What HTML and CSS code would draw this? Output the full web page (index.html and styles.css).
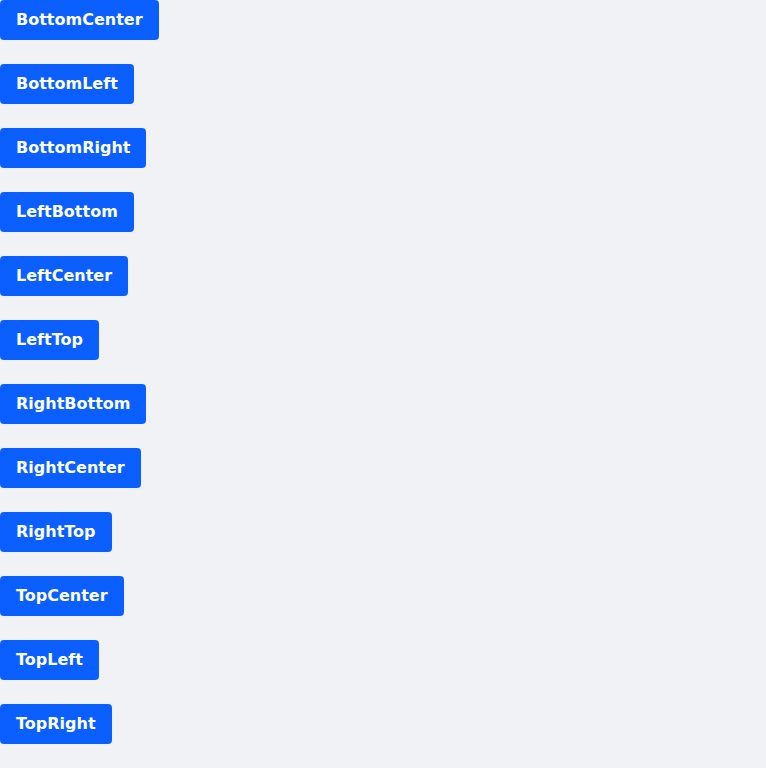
FILE: index.html
```html
<!DOCTYPE html>
<html>
<head>
<meta charset="utf-8">
<link rel="stylesheet" href="styles.css">
</head>
<body>
<div class="list">
  <button class="btn">BottomCenter</button>
  <button class="btn">BottomLeft</button>
  <button class="btn">BottomRight</button>
  <button class="btn">LeftBottom</button>
  <button class="btn">LeftCenter</button>
  <button class="btn">LeftTop</button>
  <button class="btn">RightBottom</button>
  <button class="btn">RightCenter</button>
  <button class="btn">RightTop</button>
  <button class="btn">TopCenter</button>
  <button class="btn">TopLeft</button>
  <button class="btn">TopRight</button>
</div>
</body>
</html>
```
FILE: styles.css
```css
html, body {
  margin: 0;
  padding: 0;
  background: #f1f2f6;
}
.list {
  display: flex;
  flex-direction: column;
  align-items: flex-start;
  gap: 24px;
}
.btn {
  height: 40px;
  padding: 0 16px;
  border: none;
  border-radius: 4px;
  background: #0b5fff;
  color: #fff;
  font-family: "DejaVu Sans", sans-serif;
  font-weight: bold;
  font-size: 16px;
  line-height: 38px;
  font-kerning: normal;
  text-rendering: optimizeLegibility;
  cursor: pointer;
}
```
